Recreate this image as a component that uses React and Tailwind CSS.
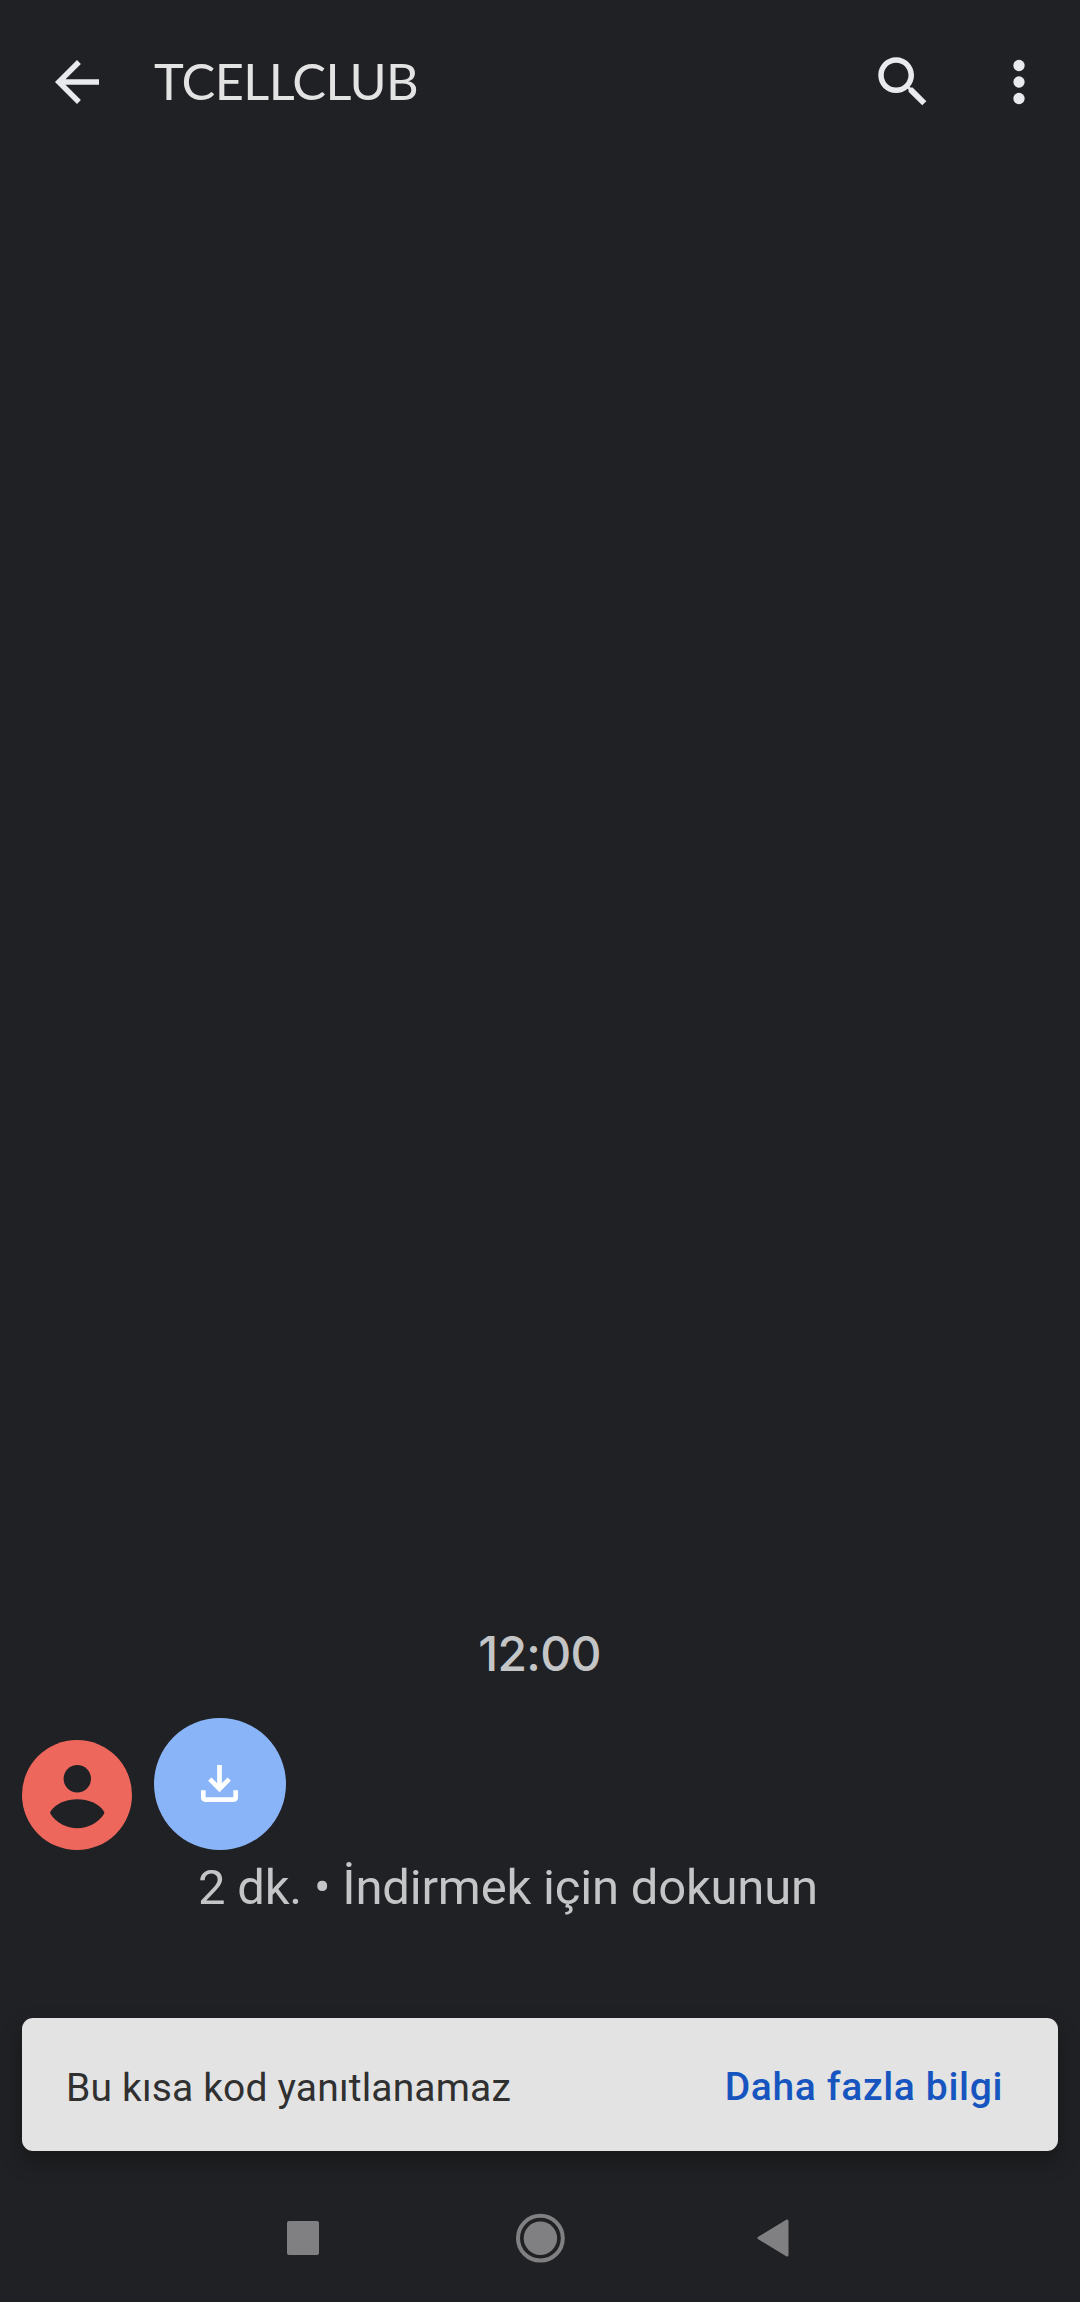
const IconButton = ({ label, children }) => (
  <button aria-label={label} className="size-[66px] shrink-0 text-[#e8eaed]">
    <svg viewBox="0 0 24 24" fill="currentColor" className="size-full">
      {children}
    </svg>
  </button>
)

const Header = () => (
  <header className="flex h-[164px] shrink-0 items-center pl-11 pr-7">
    <IconButton label="Geri">
      <path d="M20 11H7.83l5.59-5.59L12 4l-8 8 8 8 1.41-1.41L7.83 13H20v-2z" />
    </IconButton>
    <h1 className="ml-11 grow pb-[3px] font-['Lato',sans-serif] text-[50.5px] leading-[60px] tracking-[-0.6px] text-[#e3e3e3]">
      TCELLCLUB
    </h1>
    <div className="flex gap-[50px]">
      <IconButton label="Ara">
        <path d="M15.5 14h-.79l-.28-.27C15.41 12.59 16 11.11 16 9.5 16 5.91 13.09 3 9.5 3S3 5.91 3 9.5 5.91 16 9.5 16c1.61 0 3.09-.59 4.23-1.57l.27.28v.79l5 4.99L20.49 19l-4.99-5zm-6 0C7.01 14 5 11.99 5 9.5S7.01 5 9.5 5 14 7.01 14 9.5 11.99 14 9.5 14z" />
      </IconButton>
      <IconButton label="Menü">
        <circle cx="12" cy="6" r="2.05" />
        <circle cx="12" cy="12" r="2.05" />
        <circle cx="12" cy="18" r="2.05" />
      </IconButton>
    </div>
  </header>
)

const Message = () => (
  <div>
    <p className="pr-px text-center font-['Inter',sans-serif] text-[48px] font-medium leading-[60px] tracking-[-0.7px] text-[#c4c5c6]">
      12:00
    </p>
    <div className="mt-[34px] flex items-end gap-[22px] pl-[22px]">
      <div className="size-[110px] rounded-full bg-[#ee675c]">
        <svg viewBox="0 0 110 110" fill="#202124" className="size-full">
          <circle cx="55.3" cy="38.7" r="13.7" />
          <path d="M28.5 71.5C34 63 44.5 59.2 55.3 59.2S76.5 63 82 71.5Q82.7 72.8 82 74C76 83 66 88.2 55.3 88.2S34.5 83 28.5 74Q27.8 72.8 28.5 71.5Z" />
        </svg>
      </div>
      <button aria-label="İndir" className="size-[132px] rounded-full bg-[#8ab4f8]">
        <svg viewBox="0 0 132 132" fill="none" stroke="#fff" strokeWidth="4.7" className="size-full">
          <path d="M65.5 47V71M55.8 61.2l9.7 9.7 9.7-9.7" />
          <path d="M49.3 72.2V79.3Q49.3 81.6 51.6 81.6H79.4Q81.7 81.6 81.7 79.3V72.2" />
        </svg>
      </button>
    </div>
    <p className="mt-2 whitespace-nowrap pl-[198px] font-['Roboto',sans-serif] text-[49px] leading-[60px] tracking-[-0.2px] text-[#c4c5c6]">
      2 dk. • İndirmek için dokunun
    </p>
  </div>
)

const Snackbar = () => (
  <div className="mx-[22px] mt-[100px] flex h-[133px] shrink-0 items-center justify-between rounded-[11px] bg-[#e3e3e3] pl-11 pr-[55px] font-['Roboto',sans-serif] text-[39px] leading-[50px] shadow-[0_10px_22px_rgba(0,0,0,0.3)]">
    <span className="pt-[6px] tracking-[0.16px] text-[#303030]">Bu kısa kod yanıtlanamaz</span>
    <button className="pt-1 font-medium tracking-[0.66px] text-[#1655c0]">Daha fazla bilgi</button>
  </div>
)

const NavBar = () => (
  <nav className="flex h-[151px] shrink-0 items-center pl-[287px] pt-[23px] text-[#808082]">
    <div className="h-[34px] w-8 rounded-[2px] bg-current" />
    <svg viewBox="0 0 50 50" className="ml-[196px] size-[50px]">
      <circle cx="25.4" cy="25.2" r="22.4" fill="none" stroke="currentColor" strokeWidth="4" />
      <circle cx="25.4" cy="25.2" r="16.7" fill="currentColor" />
    </svg>
    <svg viewBox="0 0 32 38" className="ml-[192px] h-[38px] w-8">
      <path
        d="M2 19L30 2V36Z"
        fill="currentColor"
        stroke="currentColor"
        strokeWidth="3"
        strokeLinejoin="round"
      />
    </svg>
  </nav>
)

export default function App() {
  return (
    <div className="flex h-[2302px] w-[1080px] flex-col overflow-hidden bg-[#202124]">
      <Header />
      <main className="flex grow flex-col justify-end">
        <Message />
      </main>
      <Snackbar />
      <NavBar />
    </div>
  )
}
